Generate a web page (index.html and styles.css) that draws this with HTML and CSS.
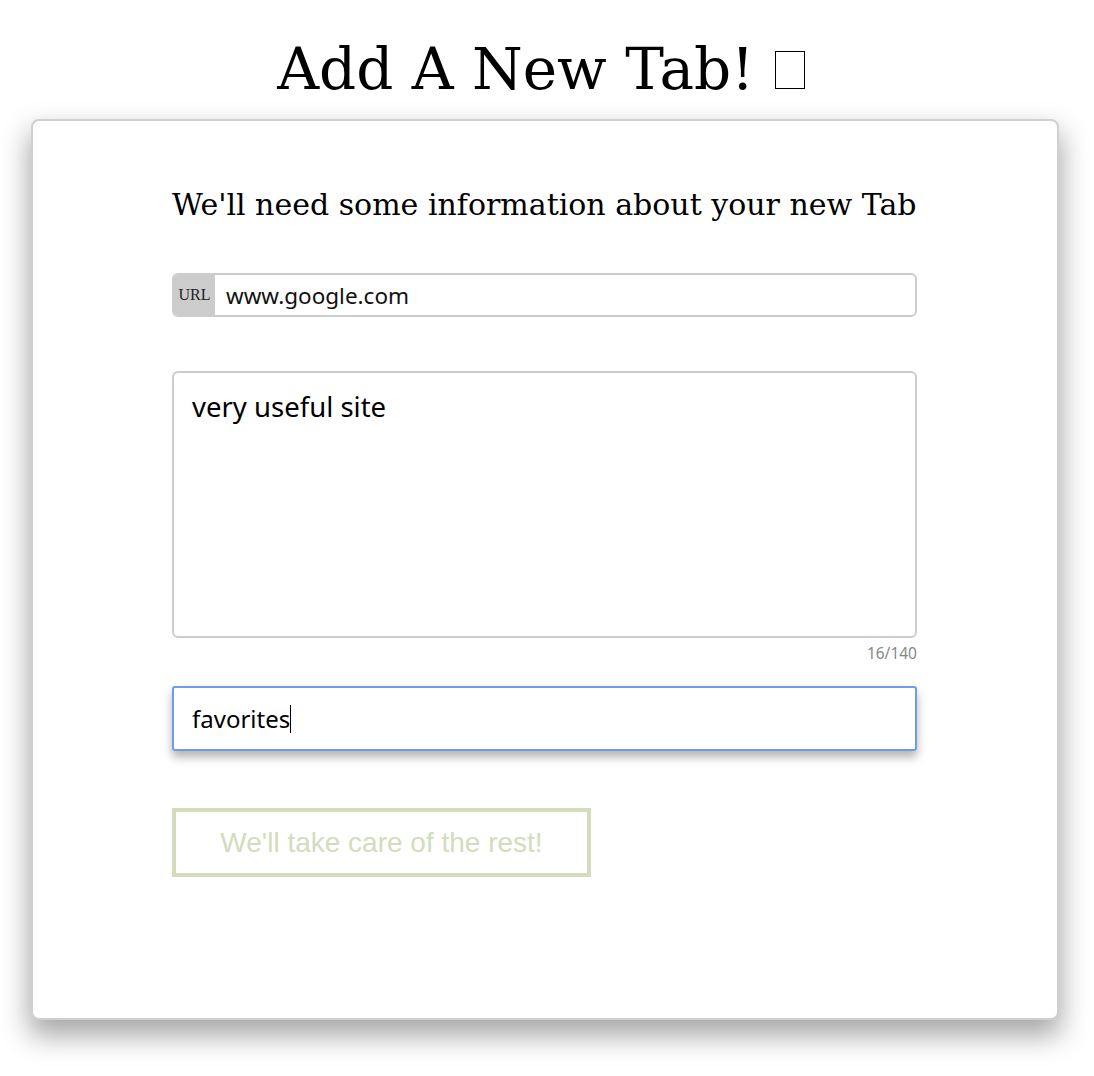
FILE: index.html
```html
<!DOCTYPE html>
<html>
<head>
<meta charset="utf-8">
<link rel="stylesheet" href="styles.css">
</head>
<body>
<div class="page">
  <h1 class="title">Add A New Tab! <span class="tofu"></span></h1>
  <div class="card">
    <h2 class="subtitle">We'll need some information about your new Tab</h2>
    <div class="url-group">
      <span class="url-prefix">URL</span>
      <span class="url-value">www.google.com</span>
    </div>
    <div class="desc-box">very useful site</div>
    <div class="counter">16/140</div>
    <div class="tag-box"><span>favorites</span><span class="caret"></span></div>
    <div class="submit">We'll take care of the rest!</div>
  </div>
</div>
</body>
</html>
```

FILE: styles.css
```css
html, body {
  margin: 0;
  padding: 0;
  background: #fff;
}
.page {
  padding-left: 31px;
  padding-bottom: 60px;
  width: 1028px;
}
.title {
  margin: 0;
  height: 119px;
  box-sizing: border-box;
  padding-top: 29px;
  text-align: center;
  font-family: "DejaVu Serif", serif;
  font-weight: normal;
  font-size: 58px;
  line-height: 80px;
  color: #000;
  padding-right: 8px;
}
.tofu {
  display: inline-block;
  width: 30px;
  height: 38px;
  border: 1px solid #000;
  box-sizing: border-box;
  vertical-align: 0px;
  margin-left: 2px;
}
.card {
  box-sizing: border-box;
  width: 1028px;
  height: 901px;
  border: 2px solid #d0d0d0;
  border-radius: 8px;
  background: #fff;
  box-shadow: 0 14px 28px 2px rgba(0,0,0,0.35);
  padding: 64px 140px 0 139px;
}
.subtitle {
  margin: 0;
  font-family: "DejaVu Serif", serif;
  font-weight: normal;
  font-size: 30px;
  line-height: 40px;
  white-space: nowrap;
  color: #000;
}
.url-group {
  margin-top: 48px;
  display: flex;
  height: 44px;
  box-sizing: border-box;
  border: 2px solid #cccccc;
  border-radius: 6px;
  overflow: hidden;
}
.url-prefix {
  width: 41px;
  background: #cccccc;
  font-family: "Liberation Serif", serif;
  font-size: 16px;
  color: #222;
  display: flex;
  align-items: center;
  justify-content: center;
}
.url-value {
  padding-left: 11px;
  font-family: "Noto Sans", sans-serif;
  font-size: 22.5px;
  color: #111;
  display: flex;
  align-items: center;
}
.desc-box {
  margin-top: 54px;
  height: 267px;
  box-sizing: border-box;
  border: 2px solid #cccccc;
  border-radius: 6px;
  padding: 16px 18px;
  font-family: "Noto Sans", sans-serif;
  font-size: 27.5px;
  line-height: 36px;
  color: #000;
}
.counter {
  text-align: right;
  font-family: "Noto Sans", sans-serif;
  font-size: 15.5px;
  line-height: 30px;
  color: #888;
  margin-bottom: 18px;
}
.tag-box {
  height: 65px;
  box-sizing: border-box;
  border: 2px solid #6f9be8;
  border-radius: 3px;
  padding: 0 18px;
  display: flex;
  align-items: center;
  font-family: "Noto Sans", sans-serif;
  font-size: 24px;
  color: #000;
  box-shadow: 0 6px 10px rgba(0,0,0,0.3);
}
.caret {
  display: inline-block;
  width: 1px;
  height: 28px;
  background: #000;
}
.submit {
  margin-top: 57px;
  width: 419px;
  height: 69px;
  box-sizing: border-box;
  border: 4px solid #d3dcbc;
  display: flex;
  align-items: center;
  justify-content: center;
  font-family: "Liberation Sans", Arial, sans-serif;
  font-size: 28px;
  color: #d3dcbc;
}
```
